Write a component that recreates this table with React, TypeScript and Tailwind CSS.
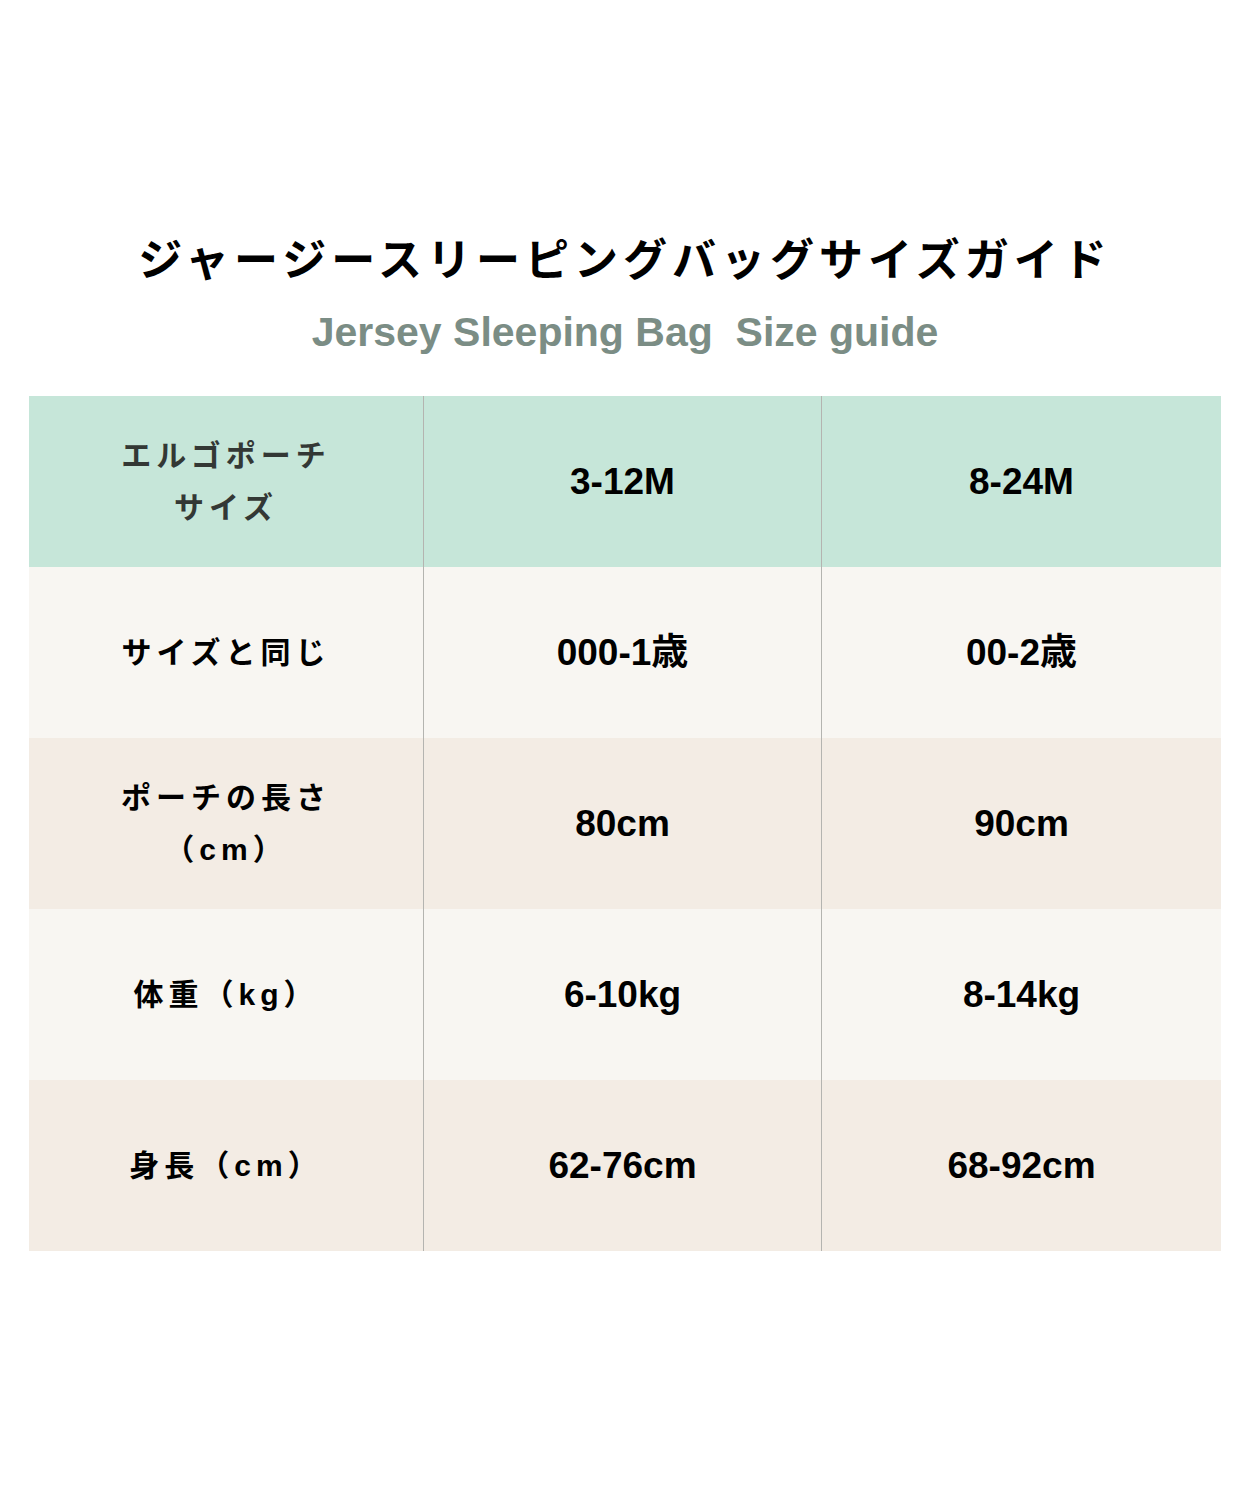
import React from "react"

const rows = [
  { label: ["エルゴポーチ", "サイズ"], a: "3-12M", b: "8-24M", bg: "bg-[#c6e6d9]", head: true },
  { label: ["サイズと同じ"], a: "000-1歳", b: "00-2歳", bg: "bg-[#f8f6f2]" },
  { label: ["ポーチの長さ", "（cm）"], a: "80cm", b: "90cm", bg: "bg-[#f3ece4]" },
  { label: ["体重（kg）"], a: "6-10kg", b: "8-14kg", bg: "bg-[#f8f6f2]" },
  { label: ["身長（cm）"], a: "62-76cm", b: "68-92cm", bg: "bg-[#f3ece4]" },
]

const jp = "font-['Noto_Sans_CJK_JP',sans-serif]"
const num = "font-['Liberation_Sans','Noto_Sans_CJK_JP',sans-serif]"

export default function App() {
  return (
    <div className="w-[1250px] h-[1500px] bg-white flex flex-col items-center pt-[227px]">
      <h1 className={`${jp} text-[44px] leading-[60px] font-bold tracking-[5px] text-black`}>
        ジャージースリーピングバッグサイズガイド
      </h1>
      <p className={`${num} mt-[21px] text-[41px] leading-[48px] font-bold text-[#7b8d85] whitespace-pre`}>
        Jersey Sleeping Bag  Size guide
      </p>
      <div className="mt-[40px] w-[1192px] flex flex-col">
        {rows.map((r, i) => (
          <div key={i} className={`grid grid-cols-[395px_398px_399px] h-[171px] ${r.bg}`}>
            <div className="flex flex-col items-center justify-center border-r border-[#b4b4b0]">
              {r.label.map((l, j) => (
                <span
                  key={j}
                  className={`${num} text-[30px] leading-[52px] font-bold tracking-[5px] ${r.head ? "text-[#333835]" : "text-black"}`}
                >
                  {l}
                </span>
              ))}
            </div>
            <div className={`${num} flex items-center justify-center border-r border-[#b4b4b0] text-[37px] font-bold text-black`}>
              {r.a}
            </div>
            <div className={`${num} flex items-center justify-center text-[37px] font-bold text-black`}>
              {r.b}
            </div>
          </div>
        ))}
      </div>
    </div>
  )
}
